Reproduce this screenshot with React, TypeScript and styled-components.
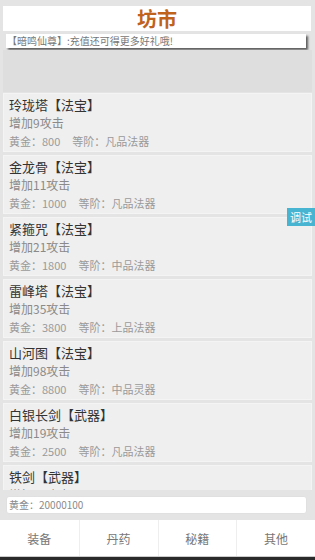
import React from "react";
import styled, { createGlobalStyle } from "styled-components";

const items = [
  { name: "玲珑塔", kind: "法宝", atk: 9, gold: 800, grade: "凡品法器" },
  { name: "金龙骨", kind: "法宝", atk: 11, gold: 1000, grade: "凡品法器" },
  { name: "紧箍咒", kind: "法宝", atk: 21, gold: 1800, grade: "中品法器" },
  { name: "雷峰塔", kind: "法宝", atk: 35, gold: 3800, grade: "上品法器" },
  { name: "山河图", kind: "法宝", atk: 98, gold: 8800, grade: "中品灵器" },
  { name: "白银长剑", kind: "武器", atk: 19, gold: 2500, grade: "凡品法器" },
  { name: "铁剑", kind: "武器", atk: 25, gold: 4000, grade: "凡品法器" },
];

const tabs = ["装备", "丹药", "秘籍", "其他"];

const App = () => {
  return (
    <Page>
      <GlobalStyle />
      <Header>
        <Title>坊市</Title>
      </Header>
      <Notice>【暗鸣仙尊】:充值还可得更多好礼哦!</Notice>
      <Banner />
      <List>
        {items.map((item) => (
          <Card key={item.name}>
            <ItemName>
              {item.name}【{item.kind}】
            </ItemName>
            <ItemDesc>增加{item.atk}攻击</ItemDesc>
            <ItemMeta>
              黄金：{item.gold}
              <Grade>等阶：{item.grade}</Grade>
            </ItemMeta>
          </Card>
        ))}
      </List>
      <GoldBar>黄金：20000100</GoldBar>
      <TabBar>
        {tabs.map((t) => (
          <Tab key={t}>{t}</Tab>
        ))}
      </TabBar>
      <BottomEdge />
      <DebugBadge>调试</DebugBadge>
    </Page>
  );
};

const GlobalStyle = createGlobalStyle`
  html, body {
    margin: 0;
    padding: 0;
  }
  body {
    font-family: "Noto Sans CJK SC", "Noto Sans", sans-serif;
  }
  * {
    box-sizing: border-box;
  }
`;

const Page = styled.div`
  position: relative;
  width: 315px;
  height: 560px;
  background-color: #e4e4e4;
  display: flex;
  flex-direction: column;
  overflow: hidden;
`;

const Header = styled.div`
  margin: 6px 4px 0 3px;
  height: 25px;
  background-color: #ffffff;
  display: flex;
  justify-content: center;
  align-items: center;
`;

const Title = styled.h1`
  margin: 0;
  font-size: 20px;
  line-height: 25px;
  font-weight: bold;
  color: #c0621c;
`;

const Notice = styled.div`
  margin: 3px 9px 0 6px;
  height: 14px;
  line-height: 14px;
  background-color: #ffffff;
  color: #777777;
  font-size: 10px;
  padding-left: 1px;
  box-shadow: 2px 2px 2px rgba(60, 60, 60, 0.8);
`;

const Banner = styled.div`
  margin: 2px 3px 0 3px;
  height: 42px;
  background-color: #dedede;
`;

const List = styled.div`
  flex: 1;
  overflow: hidden;
  display: flex;
  flex-direction: column;
  gap: 3px;
  padding: 1px 3px 0 3px;
`;

const Card = styled.div`
  flex-shrink: 0;
  height: 59px;
  padding: 2px 5px;
  background-color: #efefef;
  border: 1px solid #f4f4f4;
  display: flex;
  flex-direction: column;
`;

const ItemName = styled.div`
  font-size: 13px;
  line-height: 18px;
  color: #333333;
`;

const ItemDesc = styled.div`
  font-size: 12px;
  line-height: 18px;
  color: #8a8a8a;
`;

const ItemMeta = styled.div`
  font-size: 11px;
  line-height: 18px;
  color: #9a9a9a;
`;

const Grade = styled.span`
  margin-left: 12px;
`;

const GoldBar = styled.div`
  margin: 6px 8px 6px 6px;
  height: 18px;
  line-height: 16px;
  padding-left: 2px;
  font-size: 10px;
  color: #8a8a8a;
  background-color: #ffffff;
  border: 1px solid #e0e0e0;
  border-radius: 3px;
`;

const TabBar = styled.div`
  display: grid;
  grid-template-columns: repeat(4, 1fr);
  height: 36px;
  background-color: #ffffff;
`;

const Tab = styled.div`
  display: flex;
  justify-content: center;
  align-items: center;
  font-size: 12px;
  color: #777777;
  border-left: 1px solid #eeeeee;
  &:first-child {
    border-left: none;
  }
`;

const BottomEdge = styled.div`
  height: 4px;
  background-color: #2a2a2a;
  border-top: 1px solid #cccccc;
`;

const DebugBadge = styled.div`
  position: absolute;
  right: 0;
  top: 208px;
  width: 28px;
  height: 18px;
  line-height: 18px;
  text-align: center;
  font-size: 11px;
  color: #ffffff;
  background-color: #47b4d2;
`;

export default App;
